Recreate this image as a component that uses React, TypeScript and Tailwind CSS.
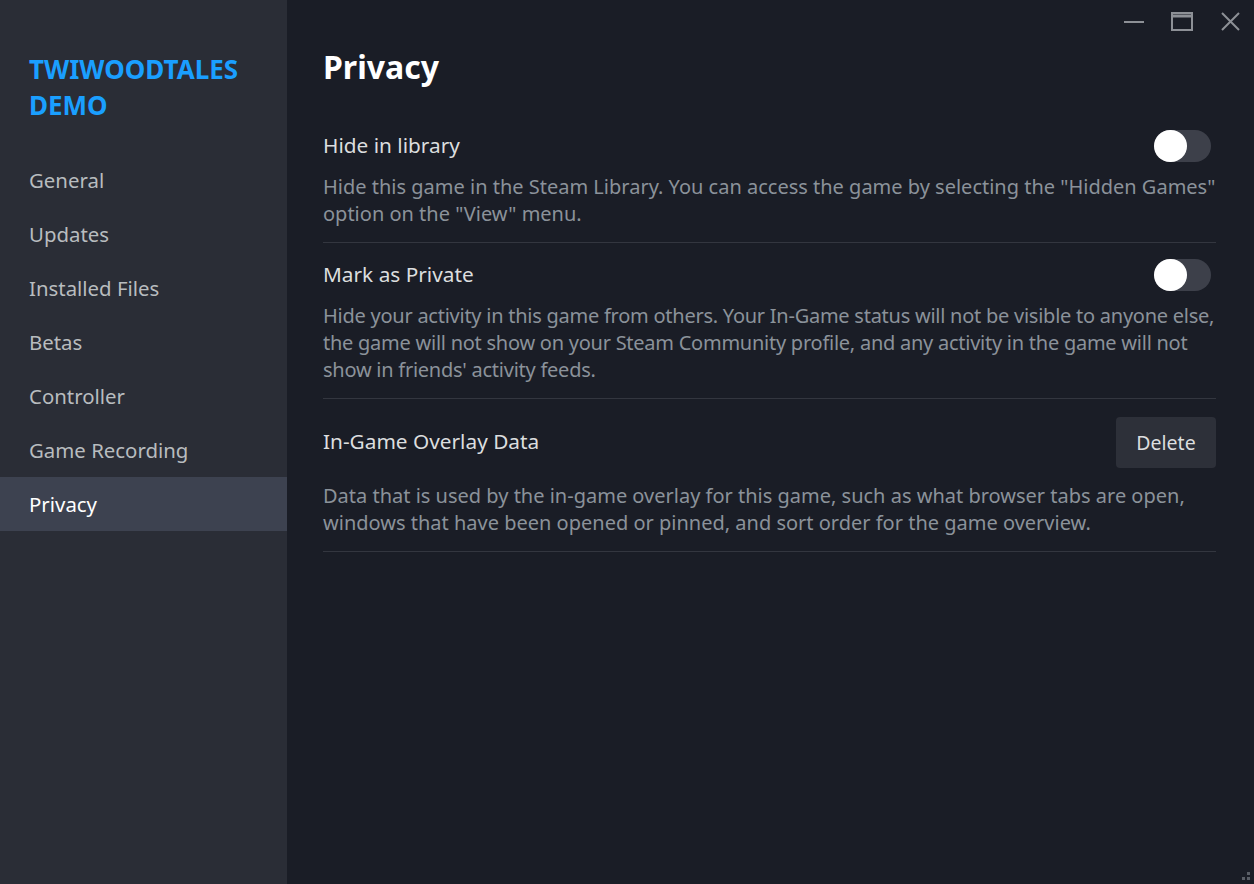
import {useState} from "react";

const navItems = ["General", "Updates", "Installed Files", "Betas", "Controller", "Game Recording", "Privacy"]

function Toggle({on, setOn}: { on: boolean, setOn: (v: boolean) => void }) {
    return (
        <button
            type="button"
            onClick={() => setOn(!on)}
            className={`relative w-[57px] h-[32px] rounded-full ${on ? "bg-[#1a9fff]" : "bg-[#3d404a]"}`}
        >
            <span
                className={`absolute top-0 w-[33px] h-[32px] rounded-full bg-white ${on ? "left-[24px]" : "left-0"}`}/>
        </button>
    )
}

function Row({title, desc, control, descClass}: { title: string, desc: string, control: any, descClass: string }) {
    return (
        <div className="pt-4 pb-[15px] border-b border-[#33363f]">
            <div className="flex items-center justify-between">
                <p className="text-[20.8px] text-[#dcdedf]">{title}</p>
                {control}
            </div>
            <p className={`${descClass} text-[20px] leading-[27px] text-[#8b929a]`}>{desc}</p>
        </div>
    )
}

export default function App() {
    const [hidden, setHidden] = useState<boolean>(false)
    const [priv, setPriv] = useState<boolean>(false)

    return (
        <div className="flex w-[1254px] h-[884px] overflow-hidden bg-[#1a1d26] font-['Noto_Sans',sans-serif]">
            <aside className="w-[287px] shrink-0 bg-[#2a2d36] pt-[51px]">
                <h1 className="px-[29px] text-[26px] leading-[36px] font-bold text-[#1a9fff]">TWIWOODTALES<br/>DEMO</h1>
                <nav className="mt-[30px] flex flex-col">
                    {
                        navItems.map((item, i) => (
                            <div key={i}
                                 className={`h-[54px] flex items-center px-[29px] text-[20.4px] ${item === "Privacy" ? "bg-[#3d4250] text-white" : "text-[#b8bcbf]"}`}>
                                {item}
                            </div>
                        ))
                    }
                </nav>
            </aside>

            <main className="relative flex-1 pl-[36px] pr-[38px] pt-[44px]">
                <div className="absolute top-0 right-0 flex items-center h-[42px] text-[#8d9096]">
                    <div className="w-[48px] flex justify-center">
                        <svg width="20" height="20" viewBox="0 0 20 20"><path d="M0 11h20" stroke="currentColor" strokeWidth="2"/></svg>
                    </div>
                    <div className="w-[48px] flex justify-center">
                        <svg width="22" height="19" viewBox="0 0 22 19" fill="none">
                            <rect x="1" y="1" width="20" height="17" stroke="currentColor" strokeWidth="2"/>
                            <path d="M1 4h20" stroke="currentColor" strokeWidth="3"/>
                        </svg>
                    </div>
                    <div className="w-[48px] flex justify-center">
                        <svg width="19" height="19" viewBox="0 0 19 19"><path d="M1 1l17 17M18 1L1 18" stroke="currentColor" strokeWidth="2"/></svg>
                    </div>
                </div>

                <h2 className="text-[32px] leading-[45px] font-bold text-white">Privacy</h2>

                <div className="mt-[25px]">
                    <Row title="Hide in library"
                         desc={'Hide this game in the Steam Library. You can access the game by selecting the "Hidden Games" option on the "View" menu.'}
                         control={<span className="mr-[5px] flex"><Toggle on={hidden} setOn={setHidden}/></span>}
                         descClass="mt-[11px]"/>
                    <Row title="Mark as Private"
                         desc="Hide your activity in this game from others. Your In-Game status will not be visible to anyone else, the game will not show on your Steam Community profile, and any activity in the game will not show in friends' activity feeds."
                         control={<span className="mr-[5px] flex"><Toggle on={priv} setOn={setPriv}/></span>}
                         descClass="mt-[11px] tracking-[-0.25px]"/>
                    <Row title="In-Game Overlay Data"
                         desc="Data that is used by the in-game overlay for this game, such as what browser tabs are open, windows that have been opened or pinned, and sort order for the game overview."
                         control={<button type="button"
                                          className="mt-[2px] w-[100px] h-[51px] rounded-sm bg-[#2d3039] text-[19.5px] text-[#dcdedf]">Delete</button>}
                         descClass="mt-[14px]"/>
                </div>

                <div className="absolute right-[4px] bottom-[4px] grid grid-cols-2 gap-[2px]">
                    <span/>
                    <span className="w-[3px] h-[3px] bg-[#5a5e66]"/>
                    <span className="w-[3px] h-[3px] bg-[#5a5e66]"/>
                    <span className="w-[3px] h-[3px] bg-[#5a5e66]"/>
                </div>
            </main>
        </div>
    )
}
